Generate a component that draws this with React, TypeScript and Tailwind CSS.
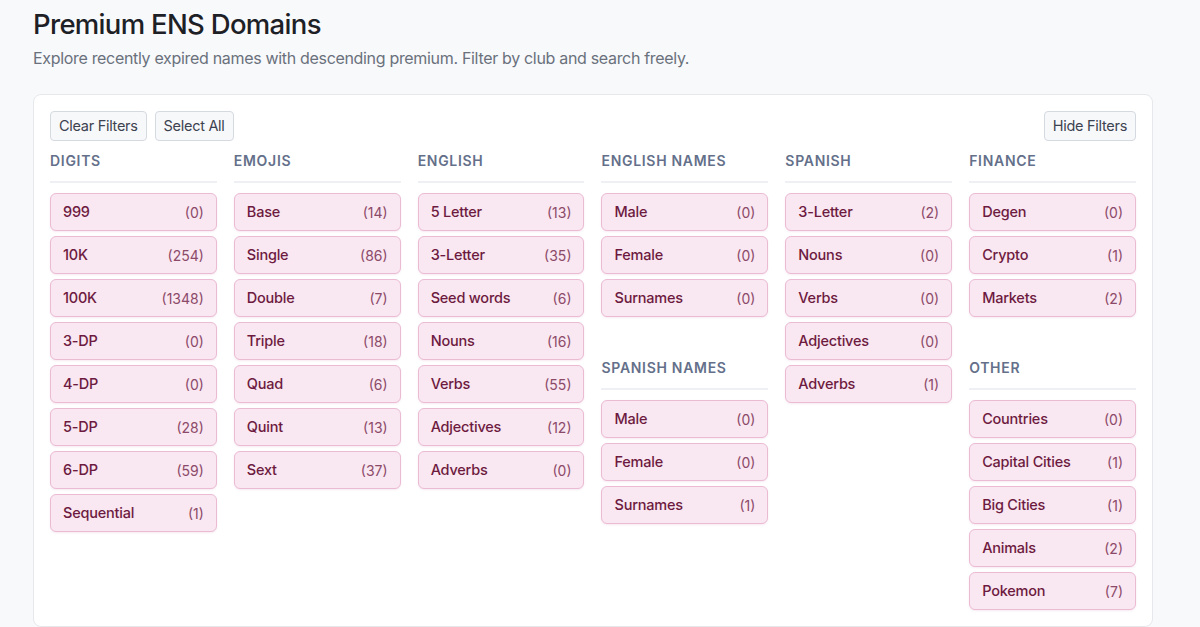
import React from "react";

type Item = [string, number];
type Section = { title: string; items: Item[] };

const columns: Section[][] = [
  [
    {
      title: "Digits",
      items: [
        ["999", 0],
        ["10K", 254],
        ["100K", 1348],
        ["3-DP", 0],
        ["4-DP", 0],
        ["5-DP", 28],
        ["6-DP", 59],
        ["Sequential", 1],
      ],
    },
  ],
  [
    {
      title: "Emojis",
      items: [
        ["Base", 14],
        ["Single", 86],
        ["Double", 7],
        ["Triple", 18],
        ["Quad", 6],
        ["Quint", 13],
        ["Sext", 37],
      ],
    },
  ],
  [
    {
      title: "English",
      items: [
        ["5 Letter", 13],
        ["3-Letter", 35],
        ["Seed words", 6],
        ["Nouns", 16],
        ["Verbs", 55],
        ["Adjectives", 12],
        ["Adverbs", 0],
      ],
    },
  ],
  [
    {
      title: "English Names",
      items: [
        ["Male", 0],
        ["Female", 0],
        ["Surnames", 0],
      ],
    },
    {
      title: "Spanish Names",
      items: [
        ["Male", 0],
        ["Female", 0],
        ["Surnames", 1],
      ],
    },
  ],
  [
    {
      title: "Spanish",
      items: [
        ["3-Letter", 2],
        ["Nouns", 0],
        ["Verbs", 0],
        ["Adjectives", 0],
        ["Adverbs", 1],
      ],
    },
  ],
  [
    {
      title: "Finance",
      items: [
        ["Degen", 0],
        ["Crypto", 1],
        ["Markets", 2],
      ],
    },
    {
      title: "Other",
      items: [
        ["Countries", 0],
        ["Capital Cities", 1],
        ["Big Cities", 1],
        ["Animals", 2],
        ["Pokemon", 7],
      ],
    },
  ],
];

function Chip({ label, count }: { label: string; count: number }) {
  return (
    <button className="flex h-[38px] w-full items-center justify-between rounded-md border border-[#ebbbd4] bg-[#f9e7f1] px-3 shadow-[0_1px_2px_rgba(190,80,140,0.12)]">
      <span className="text-[14.5px] font-medium tracking-[-0.015em] text-[#6d1a40]">{label}</span>
      <span className="text-[14px] text-[#8c4a69]">({count})</span>
    </button>
  );
}

function FilterSection({ section }: { section: Section }) {
  return (
    <div>
      <h3 className="border-b-2 border-[#eef0f3] pb-2.5 text-sm font-semibold uppercase leading-5 tracking-wider text-[#64708a]">
        {section.title}
      </h3>
      <div className="mt-[10px] flex flex-col gap-[5px]">
        {section.items.map(([label, count]) => (
          <Chip key={label} label={label} count={count} />
        ))}
      </div>
    </div>
  );
}

function ToolButton({ children }: { children: React.ReactNode }) {
  return (
    <button className="h-[30px] rounded border border-[#d5d9e0] bg-[#f7f8fa] px-2 text-[14.5px] tracking-[-0.02em] text-[#3c4350]">
      {children}
    </button>
  );
}

export default function App() {
  return (
    <div
      className="min-h-screen bg-[#f8f9fb] px-[33px] pt-[7px]"
      style={{ fontFamily: "Inter, 'Noto Sans', sans-serif" }}
    >
      <h1 className="text-[27.5px] font-medium leading-[34px] tracking-[-0.025em] text-[#1d2126]">
        Premium ENS Domains
      </h1>
      <p className="mt-[5px] text-base leading-6 tracking-[-0.02em] text-[#6a717c]">
        Explore recently expired names with descending premium. Filter by club and search freely.
      </p>

      <div className="mt-6 w-[1120px] rounded-lg border border-[#e6e8ec] bg-white p-4">
        <div className="flex items-center justify-between">
          <div className="flex gap-2">
            <ToolButton>Clear Filters</ToolButton>
            <ToolButton>Select All</ToolButton>
          </div>
          <ToolButton>Hide Filters</ToolButton>
        </div>

        <div className="mt-[10px] grid grid-cols-6 gap-x-[17px]">
          {columns.map((col, i) => (
            <div key={i} className="flex flex-col gap-[41px]">
              {col.map((s) => (
                <FilterSection key={s.title} section={s} />
              ))}
            </div>
          ))}
        </div>
      </div>
    </div>
  );
}
